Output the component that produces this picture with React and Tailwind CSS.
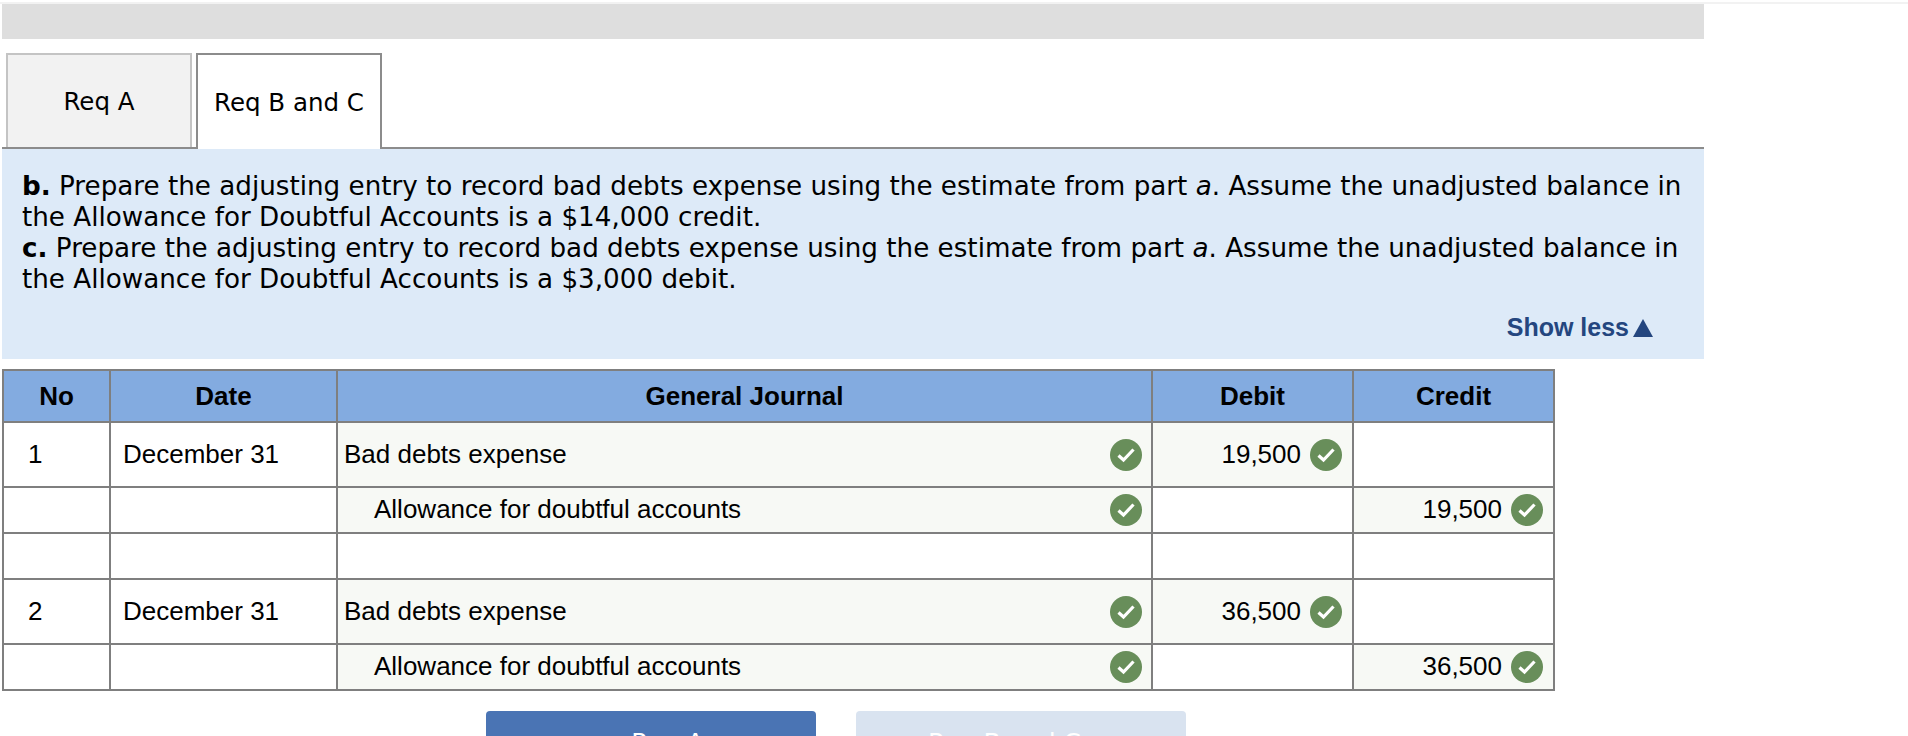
const verdana = "font-['DejaVu_Sans',Verdana,sans-serif]";
const arial = "font-['Liberation_Sans',Arial,sans-serif]";

function Check() {
  return (
    <svg viewBox="0 0 32 32" className="w-[32px] h-[32px] shrink-0">
      <circle cx="16" cy="16" r="16" fill="#688e5a" />
      <path d="M8.5 16.5 L13.5 21 L23.5 10.5" fill="none" stroke="#fff" strokeWidth="3.2" />
    </svg>
  );
}

const rows = [
  { no: '1', date: 'December 31', account: 'Bad debts expense', debit: '19,500', h: 'h-[65px]' },
  { account: 'Allowance for doubtful accounts', indent: true, credit: '19,500', h: 'h-[46px]' },
  { h: 'h-[46px]', empty: true },
  { no: '2', date: 'December 31', account: 'Bad debts expense', debit: '36,500', h: 'h-[65px]' },
  { account: 'Allowance for doubtful accounts', indent: true, credit: '36,500', h: 'h-[46px]' },
];

function Amount({ value, raised }) {
  if (!value) return <td className="border-2 border-[#7f7f7f] bg-white" />;
  return (
    <td className="border-2 border-[#7f7f7f] bg-[#f7f9f5] pr-[10px]">
      <div className="flex items-center justify-end gap-[9px]">
        <span className={raised ? 'pb-[2px]' : ''}>{value}</span>
        <Check />
      </div>
    </td>
  );
}

export default function App() {
  return (
    <div className={`w-[1908px] h-[736px] overflow-hidden bg-white text-black ${arial}`}>
      <div className="h-[4px] pt-[2px]">
        <div className="h-[2px] bg-[#f2f2f2]" />
      </div>
      <div className="ml-[2px] w-[1702px] h-[35px] bg-[#dedede]" />

      {/* Tabs */}
      <div className={`ml-[2px] w-[1702px] mt-[14px] h-[96px] flex items-end gap-[4px] pl-[4px] border-b-2 border-[#8c8c8c] text-[24.5px] ${verdana}`}>
        <div className="w-[186px] h-[94px] pt-[2px] flex items-center justify-center border-2 border-b-0 border-[#c4c4c4] bg-[#f2f2f2]">Req A</div>
        <div className="w-[186px] h-[96px] pt-[2px] -mb-[2px] flex items-center justify-center border-2 border-b-0 border-[#8c8c8c] bg-white">Req B and C</div>
      </div>

      {/* Question */}
      <div className={`ml-[2px] w-[1702px] h-[210px] bg-[#ddeaf8] px-[20px] pt-[22px] text-[26.2px] leading-[31px] ${verdana}`}>
        <p><b>b.</b> Prepare the adjusting entry to record bad debts expense using the estimate from part <i>a</i>. Assume the unadjusted balance in the Allowance for Doubtful Accounts is a $14,000 credit.</p>
        <p><b>c.</b> Prepare the adjusting entry to record bad debts expense using the estimate from part <i>a</i>. Assume the unadjusted balance in the Allowance for Doubtful Accounts is a $3,000 debit.</p>
        <div className={`mt-[17px] pr-[31px] flex items-center justify-end text-[#24467f] text-[25px] font-bold ${arial}`}>
          Show less
          <svg viewBox="0 0 20 18" className="w-[20px] h-[18px] ml-[4px]"><path d="M10 0 L20 18 H0 Z" fill="#24467f" /></svg>
        </div>
      </div>

      {/* Journal */}
      <table className="ml-[2px] mt-[10px] w-[1551px] table-fixed border-collapse border-2 border-[#7f7f7f] text-[26px]">
        <colgroup>
          <col className="w-[107px]" />
          <col className="w-[227px]" />
          <col className="w-[815px]" />
          <col className="w-[201px]" />
          <col className="w-[201px]" />
        </colgroup>
        <thead>
          <tr className="h-[52px] bg-[#83abe0] font-bold">
            {['No', 'Date', 'General Journal', 'Debit', 'Credit'].map((t) => (
              <th key={t} className="border-2 border-[#7f7f7f] font-bold text-center">{t}</th>
            ))}
          </tr>
        </thead>
        <tbody>
          {rows.map((r, i) => (
            <tr key={i} className={r.h}>
              <td className="border-2 border-[#7f7f7f] bg-white pl-[24px]">{r.no}</td>
              <td className="border-2 border-[#7f7f7f] bg-white pl-[12px]">{r.date}</td>
              {r.empty ? (
                <td className="border-2 border-[#7f7f7f] bg-white" />
              ) : (
                <td className="border-2 border-[#7f7f7f] bg-[#f7f9f5] pl-[6px] pr-[9px]">
                  <div className="flex items-center justify-between">
                    <span className={r.indent ? 'pl-[30px] pb-[2px]' : ''}>{r.account}</span>
                    <Check />
                  </div>
                </td>
              )}
              <Amount value={r.debit} />
              <Amount value={r.credit} raised />
            </tr>
          ))}
        </tbody>
      </table>

      {/* Nav buttons */}
      <div className={`mt-[20px] ml-[486px] flex gap-[40px] text-white text-[25px] ${verdana}`}>
        <button className="w-[330px] h-[60px] rounded-[4px] bg-[#4a74b4] flex items-start justify-center gap-[23px] pt-[13px]"><span>‹</span><span>Req A</span></button>
        <button className="w-[330px] h-[60px] rounded-[4px] bg-[#d9e3f0] flex items-start justify-center gap-[23px] pt-[13px]"><span>Req B and C</span><span>›</span></button>
      </div>
    </div>
  );
}
